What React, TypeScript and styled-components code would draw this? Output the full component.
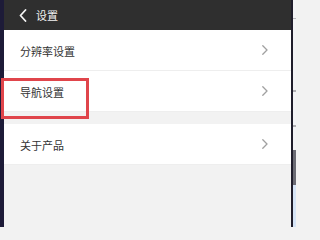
import React from "react";
import styled, { createGlobalStyle } from "styled-components";

const Global = createGlobalStyle`
  html, body { margin: 0; padding: 0; background: #f2f2f2; }
  body { font-family: "Noto Sans CJK SC", "Noto Sans", sans-serif; }
`;

const Frame = styled.div`
  position: relative;
  display: flex;
  width: 296px;
  height: 227px;
  overflow: hidden;
`;

const LeftStrip = styled.div`
  width: 4px;
  flex: none;
  background: #1d1b38;
`;

const Main = styled.div`
  flex: 1;
  display: flex;
  flex-direction: column;
  background: #f2f2f2;
`;

const Header = styled.div`
  height: 30px;
  flex: none;
  display: flex;
  align-items: center;
  background: #2f2f2f;
  padding-left: 15px;
  gap: 9px;
`;

const Title = styled.span`
  color: #f2f2f2;
  font-size: 11px;
  line-height: 1;
`;

const Group = styled.div<{ $gap?: number }>`
  display: flex;
  flex-direction: column;
  margin-top: ${(p) => p.$gap ?? 0}px;
  background: #ffffff;
`;

const Row = styled.div`
  height: 40px;
  display: flex;
  align-items: center;
  justify-content: space-between;
  padding: 0 23px 0 16px;
  border-bottom: 1px solid #eeeeee;
  background: #ffffff;
`;

const Label = styled.span`
  color: #333333;
  font-size: 11px;
  line-height: 1;
  padding-top: 2px;
`;

const DarkLine = styled.div`
  width: 2px;
  flex: none;
  background: #1f1d2b;
`;

const RightPanel = styled.div`
  width: 3px;
  flex: none;
  display: flex;
  flex-direction: column;
`;

const Seg = styled.div<{ $h: number; $c: string }>`
  height: ${(p) => p.$h}px;
  flex: none;
  background: ${(p) => p.$c};
`;

const Highlight = styled.div`
  position: absolute;
  left: 1px;
  top: 78px;
  width: 88px;
  height: 41px;
  box-sizing: border-box;
  border: 3px solid #e0454b;
  pointer-events: none;
`;

const Back = () => (
  <svg width="8" height="13" viewBox="0 0 8 13">
    <path d="M6.5 1 L1.5 6.5 L6.5 12" fill="none" stroke="#f4f4f4" strokeWidth="1.8" strokeLinecap="round" strokeLinejoin="round" />
  </svg>
);

const Chevron = () => (
  <svg width="6" height="10" viewBox="0 0 6 10">
    <path d="M0.8 0.8 L5 5 L0.8 9.2" fill="none" stroke="#a0a0a0" strokeWidth="1.3" strokeLinecap="round" strokeLinejoin="round" />
  </svg>
);

export default function App() {
  return (
    <>
      <Global />
      <Frame>
        <LeftStrip />
        <Main>
          <Header>
            <Back />
            <Title>设置</Title>
          </Header>
          <Group>
            <Row>
              <Label>分辨率设置</Label>
              <Chevron />
            </Row>
            <Row>
              <Label>导航设置</Label>
              <Chevron />
            </Row>
          </Group>
          <Group $gap={12}>
            <Row>
              <Label>关于产品</Label>
              <Chevron />
            </Row>
          </Group>
        </Main>
        <DarkLine />
        <RightPanel>
          <Seg $h={18} $c="#f3f3f5" />
          <Seg $h={1} $c="#b8b8bc" />
          <Seg $h={71} $c="#f3f3f5" />
          <Seg $h={2} $c="#b0b0b4" />
          <Seg $h={33} $c="#f3f3f5" />
          <Seg $h={2} $c="#b0b0b4" />
          <Seg $h={23} $c="#f3f3f5" />
          <Seg $h={35} $c="#6b6b74" />
          <Seg $h={42} $c="#d6e4f6" />
        </RightPanel>
        <Highlight />
      </Frame>
    </>
  );
}
